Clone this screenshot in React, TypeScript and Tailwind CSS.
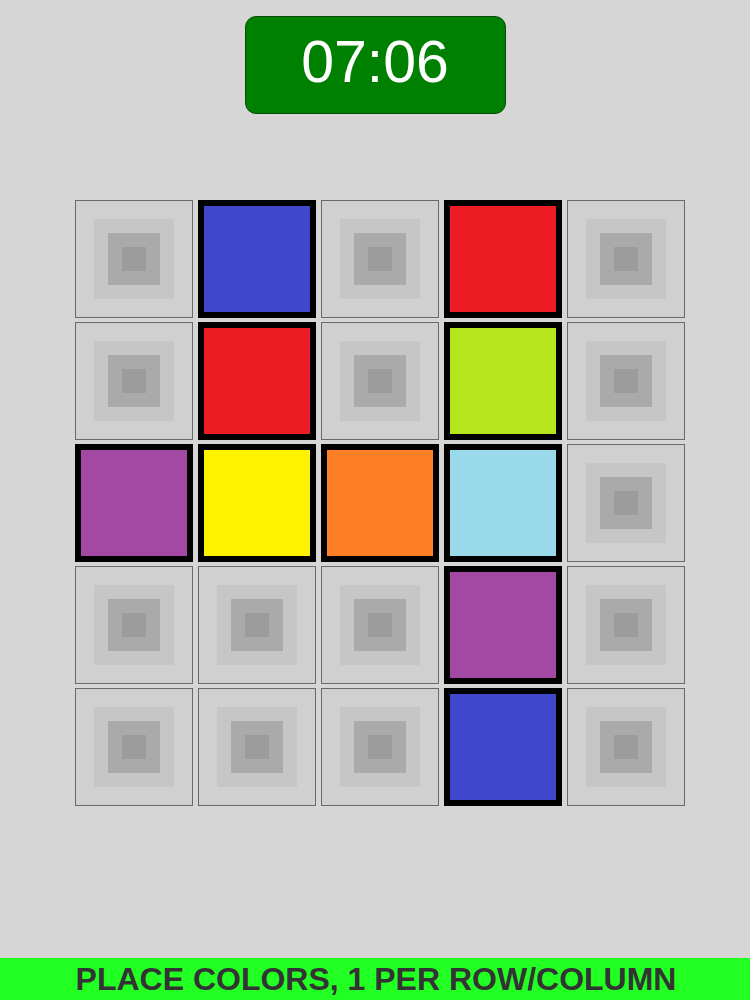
const board: (string | null)[][] = [
  [null, "#3f48cc", null, "#ed1c24", null],
  [null, "#ed1c24", null, "#b5e61d", null],
  ["#a349a4", "#fff200", "#ff7f27", "#99d9ea", null],
  [null, null, null, "#a349a4", null],
  [null, null, null, "#3f48cc", null],
];

function EmptyCell() {
  return (
    <div className="w-[118px] h-[118px] border border-[#6a6a6a] bg-[#d0d0d0] flex items-center justify-center">
      <div className="w-[80px] h-[80px] bg-[#c6c6c6] flex items-center justify-center">
        <div className="w-[52px] h-[52px] bg-[#aaaaaa] flex items-center justify-center">
          <div className="w-[24px] h-[24px] bg-[#9c9c9c]" />
        </div>
      </div>
    </div>
  );
}

function ColorCell({ color }: { color: string }) {
  return (
    <div
      className="w-[118px] h-[118px] border-[6px] border-black"
      style={{ backgroundColor: color }}
    />
  );
}

export default function App() {
  return (
    <div
      className="w-[750px] h-[1000px] bg-[#d6d6d6] flex flex-col items-center"
      style={{ fontFamily: '"Liberation Sans", Arial, sans-serif' }}
    >
      {/* Timer */}
      <div className="mt-[16px] w-[261px] h-[98px] rounded-[11px] border border-[#0a4a0a] bg-[#008000] flex items-center justify-center">
        <span className="text-white text-[59px] leading-none -mt-[6px]">07:06</span>
      </div>

      {/* Board */}
      <div className="mt-[86px] ml-[10px] grid grid-cols-5 gap-x-[5px] gap-y-[4px]">
        {board.map((row, r) =>
          row.map((c, i) =>
            c ? <ColorCell key={`${r}-${i}`} color={c} /> : <EmptyCell key={`${r}-${i}`} />
          )
        )}
      </div>

      <div className="flex-1" />

      {/* Hint bar */}
      <div className="w-full h-[42px] bg-[#22ff22] flex items-center justify-center">
        <span className="text-[32px] font-bold text-[#333333] leading-none ml-[2px]">
          PLACE COLORS, 1 PER ROW/COLUMN
        </span>
      </div>
    </div>
  );
}
